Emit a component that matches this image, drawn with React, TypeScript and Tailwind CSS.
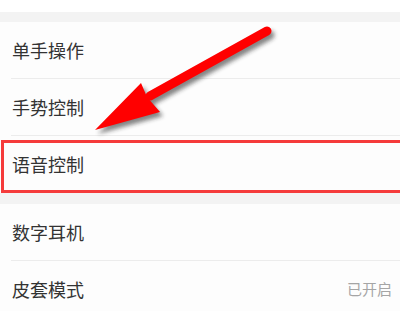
import React from "react";

const font = { fontFamily: '"Noto Sans CJK SC", "Noto Sans", sans-serif' };

const Row = ({ label, value, divider = true, boxed = false }: { label: string; value?: string; divider?: boolean; boxed?: boolean }) => (
  <div className="relative h-[57px] bg-[#fdfdfd]">
    <div className="flex h-[56px] items-center justify-between pl-3 pr-2">
      <span className="text-[18px] text-[#333333]">{label}</span>
      {value && <span className="text-[15px] text-[#a5a5a5]">{value}</span>}
    </div>
    {divider && <div className="ml-[11px] h-px bg-[#ececec]" />}
    {boxed && (
      <div className="pointer-events-none absolute left-[1px] right-[-4px] top-[4px] bottom-[0px] border-[3px] border-[#f53b3b]" />
    )}
  </div>
);

const Arrow = () => (
  <svg className="pointer-events-none absolute left-0 top-0" width="400" height="311" viewBox="0 0 400 311">
    <defs>
      <filter id="sh" x="-20%" y="-20%" width="140%" height="140%">
        <feGaussianBlur stdDeviation="2" />
      </filter>
    </defs>
    <g transform="translate(3 4)" opacity="0.55" filter="url(#sh)">
      <line x1="267" y1="31" x2="150" y2="96" stroke="#222" strokeWidth="9" strokeLinecap="round" />
      <polygon points="95,130 141,83 147,97 160,112" fill="#222" />
    </g>
    <line x1="267" y1="31" x2="150" y2="96" stroke="#ff0000" strokeWidth="9" strokeLinecap="round" />
    <polygon points="95,130 141,83 147,97 160,112" fill="#ff0000" />
  </svg>
);

export default function App() {
  return (
    <div className="relative h-[311px] w-[400px] overflow-hidden bg-[#fdfdfd]" style={font}>
      <div className="h-[12px] bg-white" />
      <div className="h-[10px] bg-[#f3f3f3]" />
      <Row label="单手操作" />
      <Row label="手势控制" />
      <Row label="语音控制" divider={false} boxed />
      <div className="h-[11px] bg-[#f3f3f3]" />
      <Row label="数字耳机" />
      <Row label="皮套模式" value="已开启" divider={false} />
      <Arrow />
    </div>
  );
}
